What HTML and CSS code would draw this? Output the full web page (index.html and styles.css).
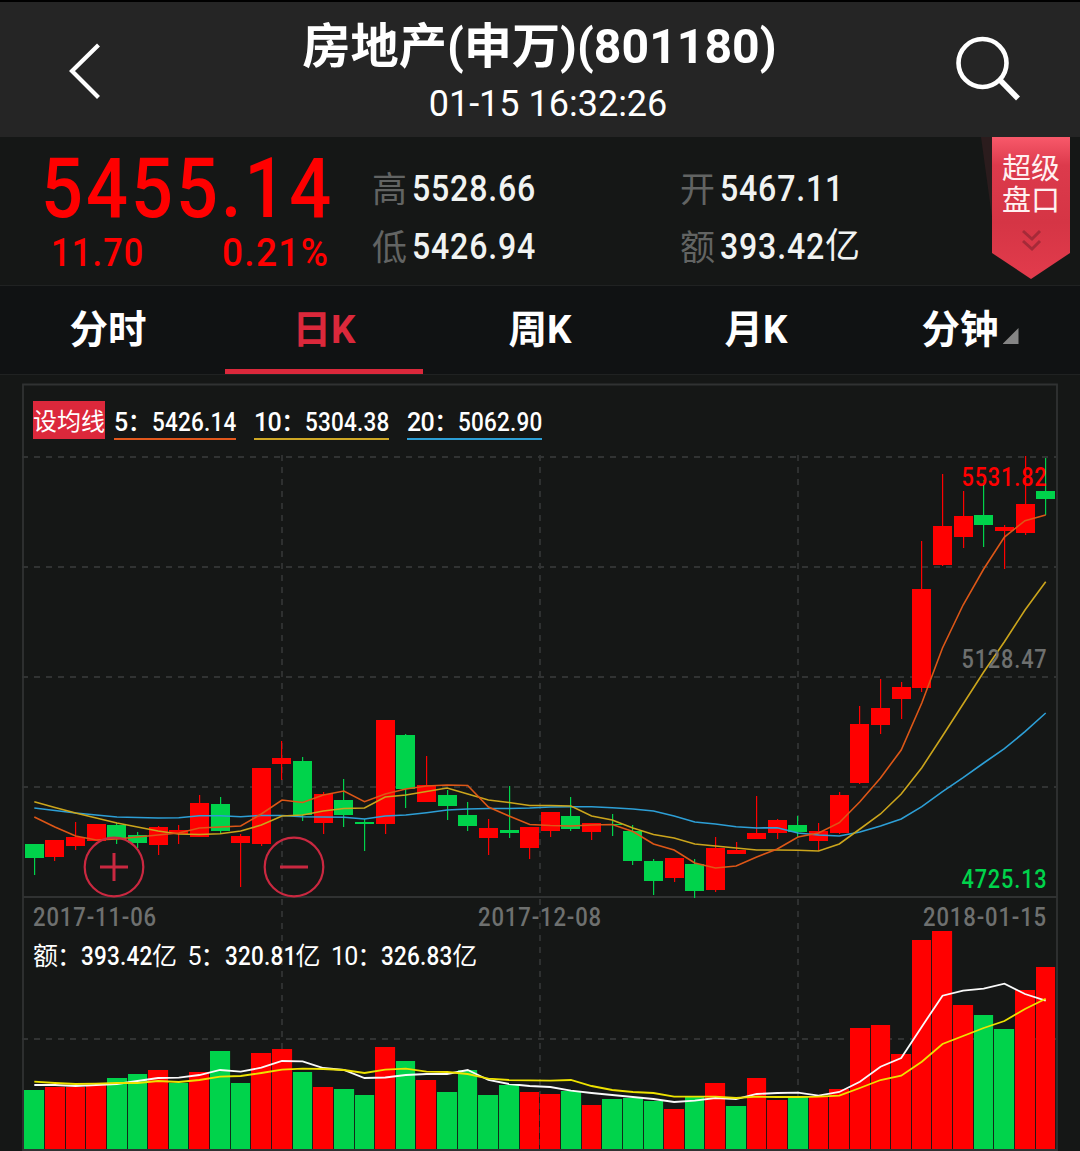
FILE: index.html
```html
<!DOCTYPE html>
<html lang="zh-CN">
<head>
<meta charset="utf-8">
<title>房地产(申万)(801180)</title>
<link rel="stylesheet" href="styles.css">
</head>
<body>
<header class="topbar">
  <svg class="icon" width="60" height="70" viewBox="0 0 60 70"><path d="M50.500 10 24 36 50.500 62.500" fill="none" stroke="#fff" stroke-width="4.200"/></svg>
  <div class="titles">
    <h1 class="title">房地产(申万)(801180)</h1>
    <div class="time">01-15 16:32:26</div>
  </div>
  <svg class="icon" width="80" height="80" viewBox="0 0 80 80"><circle cx="32.500" cy="33" r="24" fill="none" stroke="#fff" stroke-width="4.600"/><path d="M49 49 68 68.500" stroke="#fff" stroke-width="5.500"/></svg>
</header>

<section class="quote">
  <div class="price-block">
    <div class="price"><span class="num">5455.14</span></div>
    <div class="changes"><span class="chg"><span class="num">11.70</span></span><span class="num">0.21%</span></div>
  </div>
  <dl class="stats">
    <div class="stat"><dt>高</dt><dd><span class="num">5528.66</span></dd></div>
    <div class="stat"><dt>开</dt><dd><span class="num">5467.11</span></dd></div>
    <div class="stat"><dt>低</dt><dd><span class="num">5426.94</span></dd></div>
    <div class="stat"><dt>额</dt><dd><span class="num amount">393.42</span><span class="unit">亿</span></dd></div>
  </dl>
  <div class="ribbon">
    <svg class="ribbon-shape" width="92" height="144" viewBox="0 0 92 144">
      <defs><linearGradient id="rib" x1="0" y1="0" x2="0" y2="1"><stop offset="0" stop-color="#f8596a"/><stop offset=".2" stop-color="#dc3a4c"/><stop offset=".6" stop-color="#d53545"/><stop offset="1" stop-color="#e23b4c"/></linearGradient></defs>
      <path d="M1 0H12V80Z" fill="#2b1c1d"/>
      <path d="M12 0H90V116L51 142 12 116Z" fill="url(#rib)"/>
      <path d="M43 94 52 102 60 94M43 104 52 112 60 104" fill="none" stroke="#a62a38" stroke-width="3"/>
    </svg>
    <div class="ribbon-text">超级<br>盘口</div>
  </div>
</section>

<nav class="tabs">
  <a class="tab">分时</a>
  <a class="tab active">日K</a>
  <a class="tab">周K</a>
  <a class="tab">月K</a>
  <a class="tab more">分钟<i class="corner"></i></a>
</nav>

<main class="chart">
  <svg id="plot" class="plot" width="1080" height="776" viewBox="0 375 1080 776"></svg>
  <div class="overlay">
    <div class="averages">
      <button class="ma-button">设均线</button>
      <span class="ma ma5">5：<span class="val">5426.14</span></span>
      <span class="ma ma10">10：<span class="val">5304.38</span></span>
      <span class="ma ma20">20：<span class="val">5062.90</span></span>
    </div>
    <div class="volume-legend"><span>额：<span class="val">393.42</span>亿</span><span>5：<span class="val">320.81</span>亿</span><span>10：<span class="val">326.83</span>亿</span></div>
  </div>
</main>
<script src="chart.js"></script>
</body>
</html>
```
FILE: styles.css
```css
* { box-sizing: border-box; }
body {
  margin: 0;
  width: 1080px;
  height: 1151px;
  overflow: hidden;
  background: #151716;
  color: #fff;
  font-family: Roboto, "Noto Sans CJK SC", sans-serif;
}
.topbar {
  display: flex;
  justify-content: space-between;
  height: 137px;
  padding: 0 48px;
  background: #252525;
  border-top: 2px solid #000;
}
.topbar .icon { margin-top: 33px; }
.topbar .icon:last-child { margin: 28px 2px 0 0; }
.titles { text-align: center; padding-left: 38px; }
.title { margin: 16px 0 0 -17px; font-size: 48.200px; line-height: 58px; font-weight: 700; }
.time { margin-top: 3px; font-size: 36px; line-height: 50px; }
.quote { position: relative; display: flex; height: 149px; border-bottom: 1px solid #202222; }
.price-block { width: 372px; padding: 13px 0 0 41px; color: #f00; font-weight: 500; }
.price { font-size: 84px; line-height: 78px; height: 82px; }
.num { display: inline-block; transform: scaleX(.88); transform-origin: left; letter-spacing: .03em; }
.price .num { letter-spacing: .04em; }
.changes { display: flex; font-size: 39px; line-height: 42px; padding-left: 10px; }
.changes .num { letter-spacing: .035em; }
.changes > .num { transform: scaleX(.95); }
.chg { width: 171px; }
.stats { display: grid; grid-template-columns: 308px 300px; grid-auto-rows: 58px; margin: 23px 0 0; }
.stat { display: flex; font-size: 36.500px; line-height: 58px; }
.stat dt { width: 40px; color: #626463; font-family: "Noto Sans CJK SC", sans-serif; font-weight: 400; font-size: 35px; line-height: 54px; }
.stat dd { display: flex; margin: 0; font-weight: 500; color: #f1f3f2; }
.stat dd > .num { letter-spacing: .025em; }
.stat dd > .amount { width: 105px; }
.unit { font-weight: 400; font-size: 35px; }
.ribbon { position: absolute; left: 980px; top: 0; }
.ribbon-shape { display: block; }
.ribbon-text { position: absolute; left: 22px; top: 13px; font: 400 29px/32px "Noto Sans CJK SC", sans-serif; color: #fff1f1; white-space: nowrap; }
.tabs { display: grid; grid-template-columns: repeat(5, 1fr); height: 89px; background: #101213; border-bottom: 1px solid #202222; }
.tab { display: flex; justify-content: center; font-weight: 700; font-size: 38.500px; line-height: 88px; }
.tab.active { position: relative; color: #db283b; }
.tab.active::after { content: ""; position: absolute; left: 9px; right: 9px; top: 83px; height: 5px; background: #db283b; }
.tab.more { padding-right: 4px; }
.corner { width: 16px; height: 16px; margin: 42px 0 0 4px; background: #858585; clip-path: polygon(100% 0, 100% 100%, 0 100%); }
.chart { display: grid; }
.plot, .overlay { grid-area: 1 / 1; }
.plot { display: block; }
.overlay { padding: 26px 33px; }
.averages { display: flex; height: 39px; font-size: 25px; font-weight: 500; letter-spacing: -.75px; }
.ma-button { width: 72px; height: 38px; margin-right: 9px; padding: 0; border: 0; background: #dc283b; color: #fff; font: 400 24px/38px "Noto Sans CJK SC", sans-serif; }
.ma { width: 135px; height: 39px; margin-right: 18px; line-height: 43px; border-bottom: 2px solid; white-space: nowrap; }
.val { display: inline-block; transform: scaleX(.9); transform-origin: left; letter-spacing: .25px; margin-right: -8.500px; font-weight: 500; }
.ma5 { width: 122px; border-color: #e2581d; }
.ma10 { border-color: #cfa825; }
.ma20 { border-color: #2d9fd6; }
.volume-legend { display: flex; gap: 11.500px; margin-top: 499px; font-size: 25px; line-height: 36px; letter-spacing: -1px; }
.label { font-family: Roboto, sans-serif; font-size: 25px; font-weight: 500; letter-spacing: 1px; }
```
FILE: chart.js
```js
const RED = "#ff0000", GREEN = "#00d34b";

// colour, body top, body bottom, high, low, volume top
const days = [
  "G 844 858 844 875 1090", "R 840 857 840 861 1087", "R 837 846 822 850 1087", "R 824 841 824 841 1085",
  "G 825 839 823 844 1078", "G 835 843 832 848 1074", "R 827 845 826 855 1070", "R 830 834 825 844 1083 G",
  "R 803 837 795 837 1072", "G 804 831 797 834 1051", "R 836 843 834 887 1083 G", "R 768 844 768 846 1053",
  "R 758 764 741 780 1049", "G 761 815 757 821 1072", "R 794 823 792 834 1087", "G 800 815 779 827 1089",
  "G 822 824 819 851 1095", "R 720 824 720 834 1047", "G 735 789 734 808 1061", "R 785 802 756 802 1080",
  "G 795 806 790 820 1092", "G 815 826 802 831 1070", "R 828 838 819 855 1095 G", "G 830 833 786 838 1085",
  "R 827 848 827 859 1092", "R 812 831 812 837 1094", "G 816 829 797 831 1091", "R 823 832 823 840 1105",
  "G 824 825 814 836 1099", "G 831 861 825 865 1098", "G 861 881 859 895 1101", "R 858 878 858 882 1109",
  "G 864 891 859 898 1097", "R 848 890 837 892 1083", "R 850 854 842 854 1106 G", "R 833 839 796 839 1078",
  "R 820 833 819 839 1100", "G 825 832 816 838 1096", "R 831 841 823 851 1097", "R 795 833 792 834 1089",
  "R 724 783 706 784 1028", "R 708 725 679 734 1025", "R 687 699 682 719 1054", "R 589 688 541 692 940",
  "R 526 565 474 566 931", "R 516 537 491 548 1005", "G 515 525 480 547 1015", "R 527 531 525 569 1029 G",
  "R 504 533 456 535 990", "G 491 499 458 515 967 R"
].map(s => s.split(" "));

const lines = [
  ["#2d9fd6", [808,810.5,813,815,817,817.5,818,817.7,815.7,815.7,816.7,815.5,815.5,816.7,817,817.3,819,816,815,812.7,810,809,808.5,808.5,808,807,806.7,806.7,807.7,809,811,816,822,824,826.7,828,827.7,833,835,836,832,826,819,806.7,791.7,777.7,763,748.7,731.7,713]],
  ["#cba51c", [801.7,807.5,813,818,823,827,831,834,834.5,833.7,831,825,816,815,811,808.5,808,797,795,791.5,788,794,800,802.5,805.5,805.5,806,816,820,828,834.5,838,844,846,848,850,850,850.3,851,844,829,814,794,767.7,736,704,672,641.7,610,581.7]],
  ["#dd5717", [817,827,836,840,839,837,835,833,828,827,826,814,800,802.5,795,791,801.7,794,789,786,785,785.5,807,816,824.5,825.5,826,825,824.5,831.5,844,850,863,868,866,857,849,837,833,822.7,801.7,778,750,703,648,605,569,537,520.7,515]],
  ["#fafafa", [1085,1085,1086,1085,1084,1081,1078,1077.7,1075,1070,1071.7,1067.7,1061,1061.3,1068,1070,1078,1077.5,1075,1074,1074,1070,1080,1084,1086,1087,1090.7,1093,1095,1097,1099,1102,1100.7,1098,1099,1094,1093,1092.7,1095.7,1092,1081.7,1066.7,1058,1026.7,995.7,990.7,988.7,983.7,994,1000.7]],
  ["#eee200", [1081.7,1083,1084,1083.7,1083,1083,1081,1082,1080,1076.7,1076,1073,1069.7,1068.7,1069,1070,1073,1069.7,1068.7,1071.7,1072,1074,1078.7,1080,1080.3,1080.7,1080,1086,1090,1092,1093,1096.7,1096.7,1096.7,1098,1096.7,1097,1097,1096.7,1095.7,1088,1080,1075.7,1061.7,1044,1036,1028,1021,1009,998.7]]
];

const x = i => 34.3 + i * 20.64;
const rect = (l, t, w, h, c) => `<rect x="${l}" y="${t}" width="${w}" height="${h}" fill="${c}"/>`;
const text = (s, l, y, w, c) => `<text class="label" x="${l}" y="${y}" textLength="${w}" lengthAdjust="spacingAndGlyphs" fill="${c}">${s}</text>`;
let out = "";

// frame and dashed grid
out += '<path d="M23 1151V384.500H1057V1151M23 897H1057M23 1150H1057" fill="none" stroke="#303232" stroke-width="1.800"/>';
let grid = "";
[457, 567, 677, 787, 1039].forEach(y => { grid += `M22 ${y}H1056`; });
[282, 540, 798].forEach(v => { grid += `M${v} 455V1149`; });
out += `<path d="${grid}" fill="none" stroke="#313333" stroke-width="1.800" stroke-dasharray="6 6"/>`;

days.forEach(([c, top, bottom, high, low, vol, volColor], i) => {
  const col = c === "R" ? RED : GREEN;
  const barCol = (volColor || c) === "R" ? RED : GREEN;
  const left = Math.round(x(i) - 9.5), mid = Math.round(x(i) - 0.5);
  const barLeft = Math.round(x(i) - 10), barRight = Math.round(x(i + 1) - 10);
  out += rect(mid, high, 1.2, low - high, col) + rect(left, top, 19, bottom - top, col);
  out += rect(barLeft, vol, barRight - barLeft - 0.9, 1149 - vol, barCol);
});
lines.forEach(([c, ys], n) => {
  out += `<polyline points="${ys.map((y, i) => x(i).toFixed(1) + "," + y).join(" ")}" fill="none" stroke="${c}" stroke-width="${n > 2 ? 1.8 : 1.6}"/>`;
});

out += text("5531.82", 961.5, 486, 86, RED) + text("5128.47", 961.5, 668, 86, "#6e706f") + text("4725.13", 961.5, 888, 86, GREEN);
out += text("2017-11-06", 33, 926, 124, "#6e706f") + text("2017-12-08", 478, 926, 124, "#6e706f") + text("2018-01-15", 923, 926, 124, "#6e706f");
out += '<g fill="none" stroke="#ca2840" stroke-width="2.200"><circle cx="114" cy="867" r="29.300"/><circle cx="294" cy="867" r="29.300"/></g>';
out += '<path d="M100 867H128M114 853V881M280 867H308" stroke="#ca2840" stroke-width="3" fill="none"/>';

document.getElementById("plot").innerHTML = out;
```
